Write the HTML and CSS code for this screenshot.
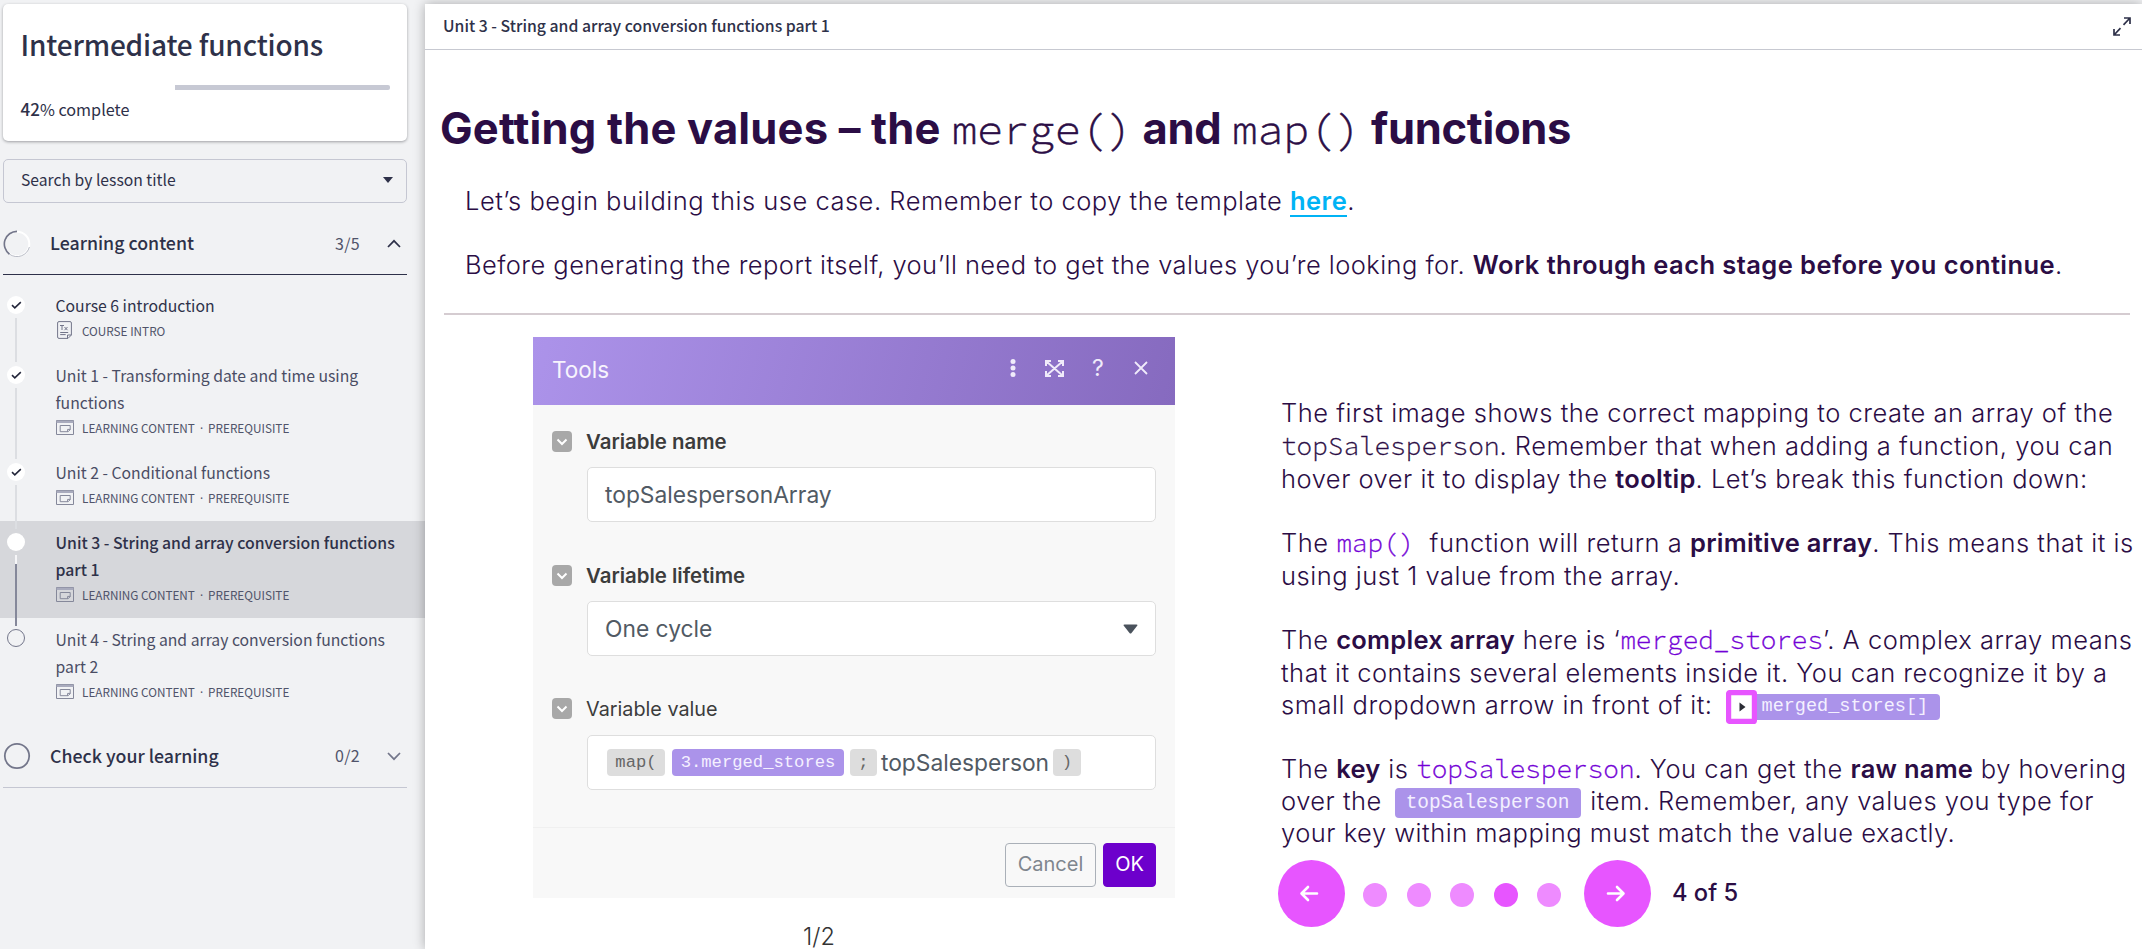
FILE: index.html
```html
<!DOCTYPE html>
<html lang="en">
<head>
<meta charset="utf-8">
<title>Intermediate functions</title>
<link rel="stylesheet" href="styles.css">
</head>
<body>
<svg width="0" height="0" class="defs">
  <symbol id="check" viewBox="0 0 18 18"><path d="M5 9.2l2.8 2.6 6-5.6" fill="none" stroke="#23263a" stroke-width="1.6"/></symbol>
  <symbol id="lesson" viewBox="0 0 18 15"><g fill="none" stroke="#85889a" stroke-width="1"><path d="M.5.5h17v14H.5z"/><path d="M.5 1.8h17" stroke="#a9abbd" stroke-width="2.4"/><path d="M4.2 5.5h10v4.2l-2 2h-8zM11.6 11.6V9.4h2.6"/></g></symbol>
  <symbol id="vee" viewBox="0 0 20 21"><rect width="20" height="21" rx="4" fill="#a8a8a8"/><path d="M5.5 8.5l4.5 4.5 4.5-4.5" fill="none" stroke="#fff" stroke-width="2"/></symbol>
</svg>
<aside class="sidebar">
  <section class="card">
    <h1 class="course">Intermediate functions</h1>
    <div class="progress"><div class="progress-rest"></div></div>
    <p class="percent"><b>42</b><span class="pct">%</span> complete</p>
  </section>
  <div class="search"><span>Search by lesson title</span>
    <svg width="10" height="6" viewBox="0 0 10 6"><path d="M0 0h10L5 6z" fill="#2e3149"/></svg>
  </div>
  <div class="section">
    <svg class="ring" width="28" height="28" viewBox="0 0 28 28" fill="none"><circle cx="14" cy="14" r="12.3" stroke="#fff" stroke-width="2"/><path d="M14 1.3A12.7 12.7 0 0 0 6.5 24.2" stroke="#73768a" stroke-width="1.7"/><path d="M6.5 24.2A12.8 12.8 0 0 0 26.4 17" stroke="#a5a8b5" stroke-width=".8"/></svg>
    <span class="section-name">Learning content</span><span class="count">3/5</span>
    <svg width="14" height="9" viewBox="0 0 14 9"><path d="M1 8l6-6.2L13 8" fill="none" stroke="#2e3149" stroke-width="1.7"/></svg>
  </div>
  <ul class="lessons">
    <li class="lesson first"><div class="track"><svg class="dot done"><use href="#check"/></svg><i class="line"></i></div>
      <div><p class="name">Course 6 introduction</p><p class="meta">
        <svg class="doc" width="15" height="18" viewBox="0 0 15 18" fill="none" stroke="#73768a"><path d="M2 .6h11a1.4 1.4 0 0 1 1.4 1.4v12l-3.4 3.4H2A1.4 1.4 0 0 1 .6 16V2A1.4 1.4 0 0 1 2 .6zM10.500 17.2V14h3.8M3.2 11.5h8M3.2 13.6h5.5M3 4.5h4M5 4.5V9M7.5 6l3 3.2M10.500 6l-3 3.2"/></svg>COURSE INTRO</p></div></li>
    <li class="lesson"><div class="track"><svg class="dot done"><use href="#check"/></svg><i class="line"></i></div>
      <div><p class="name">Unit 1 - Transforming date and time using<br>functions</p><p class="meta"><svg width="18" height="15"><use href="#lesson"/></svg><span>LEARNING CONTENT<span class="sep">·</span>PREREQUISITE</span></p></div></li>
    <li class="lesson"><div class="track"><svg class="dot done"><use href="#check"/></svg><i class="line"></i></div>
      <div><p class="name">Unit 2 - Conditional functions</p><p class="meta"><svg width="18" height="15"><use href="#lesson"/></svg><span>LEARNING CONTENT<span class="sep">·</span>PREREQUISITE</span></p></div></li>
    <li class="lesson current"><div class="track"><i class="dot done"></i><i class="line dark"></i></div>
      <div><p class="name">Unit 3 - String and array conversion functions<br>part 1</p><p class="meta"><svg width="18" height="15"><use href="#lesson"/></svg><span>LEARNING CONTENT<span class="sep">·</span>PREREQUISITE</span></p></div></li>
    <li class="lesson"><div class="track"><i class="dot todo"></i></div>
      <div><p class="name">Unit 4 - String and array conversion functions<br>part 2</p><p class="meta"><svg width="18" height="15"><use href="#lesson"/></svg><span>LEARNING CONTENT<span class="sep">·</span>PREREQUISITE</span></p></div></li>
  </ul>
  <div class="section closed">
    <svg class="ring" width="28" height="28" viewBox="0 0 28 28" fill="none"><circle cx="14" cy="14" r="12.2" stroke="#73768a" stroke-width="1.8"/></svg>
    <span class="section-name">Check your learning</span><span class="count">0/2</span>
    <svg width="14" height="9" viewBox="0 0 14 9"><path d="M1 1l6 6.2L13 1" fill="none" stroke="#73768a" stroke-width="1.7"/></svg>
  </div>
</aside>
<main class="main">
  <header class="topbar"><span>Unit 3 - String and array conversion functions part 1</span>
    <svg width="18" height="19" viewBox="0 0 18 19" fill="none" stroke="#2e3149" stroke-width="1.7"><path d="M11 1h6v6M17 1l-6.5 6.8M7 18H1v-6M1 18l6.5-6.8"/></svg>
  </header>
  <h2 class="title"><span class="lead">Getting the values – the </span><span class="mono">merge()</span> and <span class="mono">map()</span> functions</h2>
  <p class="intro open">Let’s begin building this use case. Remember to copy the template <a class="link">here</a>.</p>
  <p class="intro">Before generating the report itself, you’ll need to get the values you’re looking for. <b>Work through each stage before you continue</b>.</p>
  <hr class="rule">
  <div class="content">
    <figure class="figure">
      <div class="panel">
        <div class="panel-head"><span>Tools</span>
          <svg width="107" height="18" viewBox="0 0 107 18" fill="none" stroke="#f0ebfa" stroke-width="2"><g fill="#f0ebfa" stroke="none"><circle cx="3" cy="2.6" r="2.5"/><circle cx="3" cy="9" r="2.5"/><circle cx="3" cy="15.4" r="2.5"/></g><path d="M36 7V2h5M48 2h5v5M53 12v5h-5M41 17h-5v-5M36.5 2.5l16 14M52.500 2.500l-16 14" /></svg>
          <span class="q">?</span>
          <svg width="14" height="14" viewBox="0 0 14 14" fill="none" stroke="#f0ebfa" stroke-width="1.8"><path d="M1 1l12 12M13 1L1 13"/></svg>
        </div>
        <div class="fields">
          <div class="label"><svg width="20" height="21"><use href="#vee"/></svg><b>Variable name</b></div>
          <div class="input">topSalespersonArray</div>
          <div class="label"><svg width="20" height="21"><use href="#vee"/></svg><b>Variable lifetime</b></div>
          <div class="input select">One cycle<svg width="15" height="10" viewBox="0 0 15 10"><path d="M1.500.5h12q1.500 0 .7 1.200L8.500 9q-1 1.200-2 0L.8 1.700Q0 .5 1.500.5z" fill="#4a525c"/></svg></div>
          <div class="label last"><svg width="20" height="21"><use href="#vee"/></svg>Variable value</div>
          <div class="input value"><span class="chip fn">map(</span><span class="chip var">3.merged_stores</span><span class="chip semi">;</span><span class="raw">topSalesperson</span><span class="chip paren">)</span></div>
        </div>
        <div class="panel-foot"><span class="btn">Cancel</span><span class="btn ok">OK</span></div>
      </div>
      <figcaption class="caption">1/2</figcaption>
    </figure>
    <article class="text">
      <p>The first image shows the correct mapping to create an array of the<br><span class="mono">topSalesperson</span>. Remember that when adding a function, you can<br>hover over it to display the <b>tooltip</b>. Let’s break this function down:</p>
      <p>The <span class="mono violet">map()</span>&nbsp; function will return a <b>primitive array</b>. This means that it is<br>using just 1 value from the array.</p>
      <p>The <b>complex array</b> here is ‘<span class="mono violet">merged_stores</span>’. A complex array means<br>that it contains several elements inside it. You can recognize it by a<br>small dropdown arrow in front of it:<span class="tag"><svg class="marker" width="31" height="34" viewBox="0 0 31 34"><rect x="2.600" y="2.600" width="25.800" height="28.800" rx="1" fill="#fff" stroke="#e755ff" stroke-width="5.200"/><path d="M13.500 12.500l6 4.500-6 4.500z" fill="#2b2d35"/></svg><span class="tag-name">merged_stores[]</span></span></p>
      <p>The <b>key</b> is <span class="mono violet">topSalesperson</span>. You can get the <b>raw name</b> by hovering<br>over the <span class="pill">topSalesperson</span> item. Remember, any values you type for<br>your key within mapping must match the value exactly.</p>
      <nav class="pager">
        <svg class="arrow" width="67" height="67" viewBox="0 0 67 67" fill="none" stroke="#fff" stroke-width="2.600" stroke-linecap="round" stroke-linejoin="round"><circle cx="33.500" cy="33.500" r="33.500" fill="#e755ff" stroke="none"/><path d="M39 33.500H24M30 27l-6.500 6.500L30 40"/></svg>
        <i class="step"></i><i class="step"></i><i class="step"></i><i class="step on"></i><i class="step"></i>
        <svg class="arrow next" width="67" height="67" viewBox="0 0 67 67" fill="none" stroke="#fff" stroke-width="2.600" stroke-linecap="round" stroke-linejoin="round"><circle cx="33.500" cy="33.500" r="33.500" fill="#e755ff" stroke="none"/><path d="M24 33.500h15M33 27l6.500 6.500L33 40"/></svg>
        <span class="page">4 of 5</span>
      </nav>
    </article>
  </div>
</main>
</body>
</html>
```
FILE: styles.css
```css
* { box-sizing: border-box; }
body { margin: 0; display: flex; height: 949px; overflow: hidden; background: #f1f2f4; color: #2e3149; white-space: nowrap; }
h1, h2, p, ul, figure { margin: 0; padding: 0; }
svg { flex: none; display: block; }
.defs { display: none; }

.sidebar { width: 425px; flex: none; padding-top: 4px; font-family: "Noto Sans CJK SC", sans-serif; }
.card { width: 404px; height: 137px; margin-left: 3px; padding: 20px 17px 0 17.500px; background: #fff; border-radius: 5px; box-shadow: 0 1px 3px rgba(40, 44, 50, .42); }
.course { font-size: 28px; font-weight: 500; line-height: 40px; letter-spacing: -.17px; }
.progress { height: 5px; margin-top: 21px; display: flex; justify-content: flex-end; }
.progress-rest { width: 215px; background: #c7c9d4; border-radius: 0 2px 2px 0; }
.percent { margin-top: 7px; font-size: 16.200px; line-height: 24px; }
.percent b { font-weight: 500; font-size: 17px; }
.search { width: 404px; height: 44px; margin: 18px 0 0 3px; padding: 0 13px 3px 17px; border: 1px solid #c5c7d2; border-radius: 5px; display: flex; align-items: center; justify-content: space-between; font-size: 15.700px; }
.section { height: 72px; width: 404px; margin-left: 3px; padding: 10px 6px 0 0; border-bottom: 1.500px solid #2e3149; display: flex; align-items: center; }
.section-name { flex: 1; margin: -3px 0 0 19px; font-size: 17.750px; font-weight: 500; }
.count { margin: -2px 27px 0 0; font-size: 16px; letter-spacing: .3px; color: #50546a; }
.section.closed { padding-top: 10px; border-color: #c5c7d2; height: 73px; }

.lessons { list-style: none; padding-top: 9px; }
.lesson { display: flex; padding: 8px 0 11px; }
.track { width: 55.500px; margin: -8px 0 -19px; padding: 12px 0 0 7px; display: flex; flex-direction: column; }
.dot { width: 18px; height: 18px; border-radius: 50%; flex: none; }
.done { background: #fff; }
.todo { border: 1px solid #73768a; margin-top: -1px; }
.line { position: relative; z-index: 1; flex: 1; width: 1.500px; margin: 4px 0 0 8px; background: #dcdee2; }
.current { background: #d6d7db; color: #2e3149; }
.line.dark { background: linear-gradient(#f6f6f8 9px, #85889a 9px); }
.name { font-size: 15.750px; line-height: 27px; color: #4a4d64; }
.first .name { color: #2e3149; }
.current .name { color: #2e3149; font-weight: 500; font-size: 15.800px; }
.meta { display: flex; align-items: center; height: 24px; margin: -1px 0 1px; gap: 8.500px; font-size: 11.750px; color: #50546a; }
.doc { margin: 0 2px 0 1px; }
.sep { font-family: "Noto Sans", sans-serif; margin: 0 5px; }

.main { flex: 1; margin-top: 4px; height: 945px; background: #fff; box-shadow: 0 0 11px rgba(0, 0, 0, .3); color: #2b0d45; position: relative; z-index: 2; }
.topbar { height: 46px; padding: 0 11px 0 18px; border-bottom: 1px solid #c7c9d1; display: flex; align-items: center; justify-content: space-between; font: 500 15.800px/24px "Noto Sans CJK SC", sans-serif; color: #2e3149; }
.topbar span { margin-top: -2px; }
.title { padding: 50px 0 0 15px; font: 700 43.500px/56px Inter, sans-serif; letter-spacing: -.3px; height: 106px; }
.lead { letter-spacing: .18px; }
.mono { font-family: "Source Code Pro", "Noto Sans Mono", monospace; font-weight: 300; font-size: 26px; letter-spacing: 0; line-height: 0; -webkit-text-stroke: .35px currentColor; }
.title .mono { font-size: 43.200px; -webkit-text-stroke-width: .6px; }
.intro { height: 34px; margin: 28px 0 0 40px; font: 300 25.500px/34px Inter, sans-serif; letter-spacing: .435px; }
.intro.open { letter-spacing: .51px; }
.intro + .intro { margin-top: 30px; }
b { font-weight: 600; }
.intro b { letter-spacing: .42px; }
.text b { letter-spacing: .25px; }
.link { color: #00b3f5; font-weight: 600; letter-spacing: .5px; box-shadow: 0 2px #00b3f5; display: inline-block; height: 31px; }
.rule { height: 2px; margin: 31px 12px 0 19px; border: 0; background: #d5ccd1; }

.content { display: flex; }
.figure { width: 642px; margin: 22px 106px 0 108px; font-family: Inter, sans-serif; }
.panel { height: 561px; background: #f8f8f8; display: flex; flex-direction: column; }
.panel-head { height: 68px; padding: 0 27px 6px 19px; background: linear-gradient(105deg, #ac93ea, #866abf); display: flex; align-items: center; color: #f7f4fd; font-size: 22.500px; }
.panel-head > span:first-child { flex: 1; margin-top: 3px; }
.q { width: 14px; margin: 0 28px 0 -25px; color: #f0ebfa; font-size: 23px; }
.fields { height: 422px; padding: 26px 19px 0; }
.label { height: 21px; display: flex; align-items: center; gap: 14px; font-size: 19.800px; color: #3c3c3c; }
.label.last { margin-top: -1px; margin-bottom: 16px; }
.label b { font-size: 20.400px; }
.input { height: 55px; margin: 15px 0 43px 35px; padding: 0 17px; background: #fff; border: 1.500px solid #dedede; border-radius: 5px; display: flex; align-items: center; font-size: 22.800px; color: #515a64; }
.select { justify-content: space-between; }
.value { padding-left: 19px; }
.chip { height: 27px; border-radius: 4px; background: #ddd; color: #666; font: 17.200px/27px "Liberation Mono", monospace; text-align: center; }
.fn { width: 58px; }
.var { width: 172px; margin: 0 6px 0 7px; background: #ab93ea; color: #f4f0ff; }
.semi { width: 27px; }
.raw { width: 176px; text-align: center; }
.paren { width: 28px; }
.panel-foot { flex: 1; padding: 15px 19px 0; border-top: 1px solid #f0f0f0; display: flex; justify-content: flex-end; gap: 7px; }
.btn { width: 91px; height: 44px; border: 1.500px solid #aab0b8; border-radius: 4px; font-size: 20px; line-height: 41px; text-align: center; color: #7f868e; }
.ok { width: 53px; background: #6d00cc; border-color: #6d00cc; color: #fff; }
.caption { margin: 24px 0 0 270px; font-size: 23.500px; line-height: 30px; font-weight: 300; color: #333; }

.text { flex: 1; padding-top: 81px; font: 300 25.500px/33px Inter, sans-serif; letter-spacing: .51px; }
.text p { margin-bottom: 31px; }
.text p:nth-of-type(2) { margin-bottom: 32px; }
.text p:nth-of-type(3) { line-height: 32.500px; margin-bottom: 31px; }
.text p:nth-of-type(4) { margin: 0; line-height: 32px; height: 96px; }
.violet { color: #7300d6; }
.tag { display: inline-flex; align-items: center; height: 34px; margin: -4px 0 -4px 13px; vertical-align: middle; }
.tag-name { width: 183px; height: 26px; padding-left: 5px; background: #ab93ea; border-radius: 0 4px 4px 0; color: #f4f0ff; font: 18.500px/26px "Liberation Mono", monospace; letter-spacing: 0; }
.pill { display: inline-block; width: 186px; height: 30px; margin: -2px 2px -2px 5px; vertical-align: middle; background: #ab93ea; border-radius: 4px; color: #f4f0ff; font: 19.500px/30px "Liberation Mono", monospace; letter-spacing: 0; text-align: center; }
.pager { display: flex; align-items: center; margin: 11px 0 0 -3px; }
.step { width: 24px; height: 24px; margin: 4px 0 0 19.500px; border-radius: 50%; background: #ee8bff; }
.arrow + .step { margin-left: 18px; }
.on { background: #e755ff; }
.next { margin-left: 23px; }
.page { margin: -2px 0 0 21px; font-size: 23.700px; font-weight: 500; letter-spacing: 0; }
```
